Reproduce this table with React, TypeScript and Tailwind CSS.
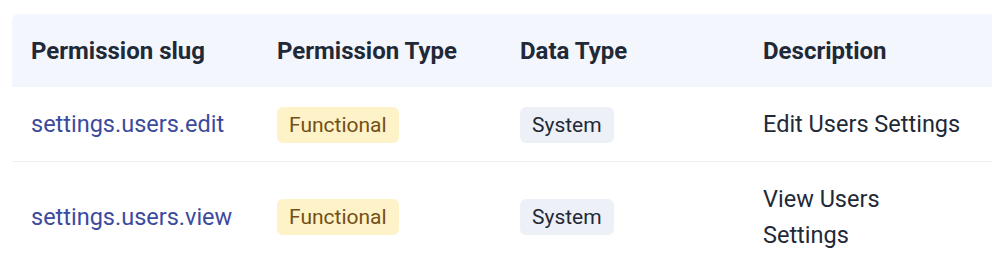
import React from 'react';

interface Permission {
    slug: string;
    permissionType: string;
    dataType: string;
    description: string;
}

const permissions: Permission[] = [
    { slug: 'settings.users.edit', permissionType: 'Functional', dataType: 'System', description: 'Edit Users Settings' },
    { slug: 'settings.users.view', permissionType: 'Functional', dataType: 'System', description: 'View Users Settings' },
];

const Badge: React.FC<{ tone: 'amber' | 'slate'; children: React.ReactNode }> = ({ tone, children }) => (
    <span
        className={
            tone === 'amber'
                ? 'inline-block rounded-md bg-[#fef3c8] px-3 py-1 text-[21px] leading-[28px] text-[#744f17]'
                : 'inline-block rounded-md bg-[#edf0f6] px-3 py-1 text-[21px] leading-[28px] text-[#1f2937]'
        }
    >
        {children}
    </span>
);

export default function App() {
    return (
        <div className="w-[992px] h-[270px] overflow-hidden bg-white pl-3 pt-[14px] font-['Roboto',sans-serif]">
            <table className="table-fixed w-[1100px] border-collapse text-left text-[23.5px] leading-[36px]">
                <colgroup>
                    <col className="w-[246px]" />
                    <col className="w-[243px]" />
                    <col className="w-[243px]" />
                    <col className="w-[242px]" />
                    <col />
                </colgroup>
                <thead>
                    <tr className="bg-[#f3f6fd] text-[24px] text-[#1f2937]">
                        <th className="rounded-tl-md px-[19px] py-[18.5px] font-bold">Permission slug</th>
                        <th className="px-[19px] py-[18.5px] font-bold">Permission Type</th>
                        <th className="px-[19px] py-[18.5px] font-bold">Data Type</th>
                        <th className="px-[19px] py-[18.5px] font-bold">Description</th>
                        <th></th>
                    </tr>
                </thead>
                <tbody>
                    {permissions.map(p => (
                        <tr key={p.slug} className="border-b border-[#eef0f3]">
                            <td className="px-[19px] py-[18.5px] align-middle text-[#3c4a9e]">{p.slug}</td>
                            <td className="px-[19px] py-[18.5px] align-middle">
                                <Badge tone="amber">{p.permissionType}</Badge>
                            </td>
                            <td className="px-[19px] py-[18.5px] align-middle">
                                <Badge tone="slate">{p.dataType}</Badge>
                            </td>
                            <td className="px-[19px] py-[18.5px] align-middle text-[#1f2937]">{p.description}</td>
                            <td></td>
                        </tr>
                    ))}
                </tbody>
            </table>
        </div>
    );
}
